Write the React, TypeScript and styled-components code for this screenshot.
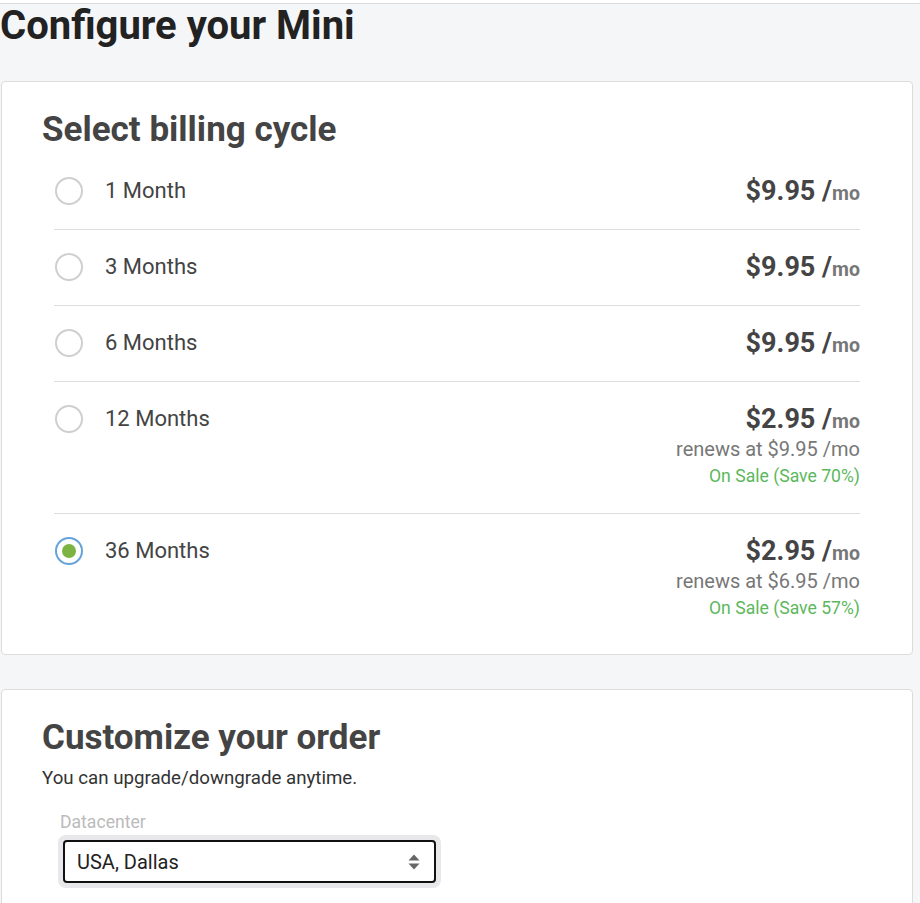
import React from "react";
import styled, { createGlobalStyle } from "styled-components";

const GlobalStyle = createGlobalStyle`
  * { box-sizing: border-box; }
  html, body { margin: 0; padding: 0; }
  body {
    background: #f5f6f8;
    font-family: Roboto, "Noto Sans", Arial, sans-serif;
    color: #444;
    overflow: hidden;
  }
`;

const TopBar = styled.div`
  height: 4px;
  background: #fff;
  border-bottom: 1px solid #dcdcdc;
`;

const Page = styled.main`
  padding: 0 7px 0 0;
`;

const Title = styled.h1`
  margin: 0 0 33px;
  font-size: 40px;
  line-height: 44px;
  font-weight: 700;
  color: #222;
`;

const Card = styled.section<{ $bottom?: number }>`
  margin: 0 0 34px 1px;
  background: #fff;
  border: 1px solid #dcdcdc;
  border-radius: 4px;
  padding: 27px 40px ${(p) => p.$bottom ?? 9}px;
`;

const CardTitle = styled.h2`
  margin: 0 0 3px;
  font-size: 35px;
  line-height: 42px;
  font-weight: 700;
  color: #444;
`;

const CycleList = styled.div`
  padding: 0 12px;
`;

const CycleRow = styled.label`
  display: flex;
  justify-content: space-between;
  align-items: flex-start;
  padding: 22px 0 23px;
  border-bottom: 1px solid #ddd;
  cursor: pointer;
  &:last-child { border-bottom: none; }
`;

const Left = styled.div`
  display: flex;
  align-items: center;
  gap: 22px;
  height: 30px;
  padding-left: 1px;
`;

const Radio = styled.span<{ $checked?: boolean }>`
  width: 28px;
  height: 28px;
  border-radius: 50%;
  border: 2px solid ${(p) => (p.$checked ? "#66a3db" : "#cfcfcf")};
  display: flex;
  align-items: center;
  justify-content: center;
  flex-shrink: 0;
  &::after {
    content: "";
    width: 14px;
    height: 14px;
    border-radius: 50%;
    background: ${(p) => (p.$checked ? "#7cb342" : "transparent")};
  }
`;

const CycleName = styled.span`
  font-size: 22px;
  line-height: 30px;
  color: #444;
`;

const PriceBox = styled.div`
  display: flex;
  flex-direction: column;
  align-items: flex-end;
  text-align: right;
`;

const Price = styled.div`
  font-size: 27px;
  line-height: 30px;
  height: 30px;
  font-weight: 700;
  color: #444;
  white-space: nowrap;
`;

const Per = styled.span`
  font-size: 19.5px;
  line-height: 1;
  font-weight: 700;
  color: #777;
`;

const Renews = styled.div`
  padding-top: 1px;
  font-size: 20px;
  line-height: 28px;
  color: #777;
`;

const Sale = styled.div`
  font-size: 17.6px;
  line-height: 27px;
  color: #5cb85c;
`;

const SubText = styled.p`
  margin: 6px 0 19px;
  font-size: 18.7px;
  line-height: 26px;
  color: #333;
`;

const Field = styled.div`
  margin-left: 16px;
  width: 383px;
`;

const FieldLabel = styled.div`
  font-size: 17.6px;
  line-height: 24px;
  color: #bbb;
  padding-left: 2px;
  margin-bottom: 1px;
`;

const SelectRing = styled.div`
  padding: 5px;
  background: #e8e8ea;
  border-radius: 8px;
`;

const SelectBox = styled.div`
  height: 43px;
  border: 2px solid #111;
  border-radius: 4px;
  background: #fff;
  display: flex;
  align-items: center;
  justify-content: space-between;
  padding: 0 14px 0 12px;
  font-size: 20px;
  color: #222;
`;

const Arrows = () => (
  <svg width="12" height="16" viewBox="0 0 12 16" aria-hidden="true">
    <path d="M6 0.5 L11.5 6.5 H0.5 Z" fill="#666" />
    <path d="M6 15.5 L11.5 9.5 H0.5 Z" fill="#666" />
  </svg>
);

type Cycle = {
  name: string;
  price: string;
  renews?: string;
  sale?: string;
  checked?: boolean;
};

const cycles: Cycle[] = [
  { name: "1 Month", price: "$9.95" },
  { name: "3 Months", price: "$9.95" },
  { name: "6 Months", price: "$9.95" },
  { name: "12 Months", price: "$2.95", renews: "renews at $9.95 /mo", sale: "On Sale (Save 70%)" },
  { name: "36 Months", price: "$2.95", renews: "renews at $6.95 /mo", sale: "On Sale (Save 57%)", checked: true },
];

export default function App() {
  return (
    <>
      <GlobalStyle />
      <TopBar />
      <Page>
        <Title>Configure your Mini</Title>
        <Card>
          <CardTitle>Select billing cycle</CardTitle>
          <CycleList>
            {cycles.map((c) => (
              <CycleRow key={c.name}>
                <Left>
                  <Radio $checked={c.checked} />
                  <CycleName>{c.name}</CycleName>
                </Left>
                <PriceBox>
                  <Price>
                    {c.price} /<Per>mo</Per>
                  </Price>
                  {c.renews && <Renews>{c.renews}</Renews>}
                  {c.sale && <Sale>{c.sale}</Sale>}
                </PriceBox>
              </CycleRow>
            ))}
          </CycleList>
        </Card>
        <Card $bottom={60}>
          <CardTitle>Customize your order</CardTitle>
          <SubText>You can upgrade/downgrade anytime.</SubText>
          <Field>
            <FieldLabel>Datacenter</FieldLabel>
            <SelectRing>
              <SelectBox>
                <span>USA, Dallas</span>
                <Arrows />
              </SelectBox>
            </SelectRing>
          </Field>
        </Card>
      </Page>
    </>
  );
}
